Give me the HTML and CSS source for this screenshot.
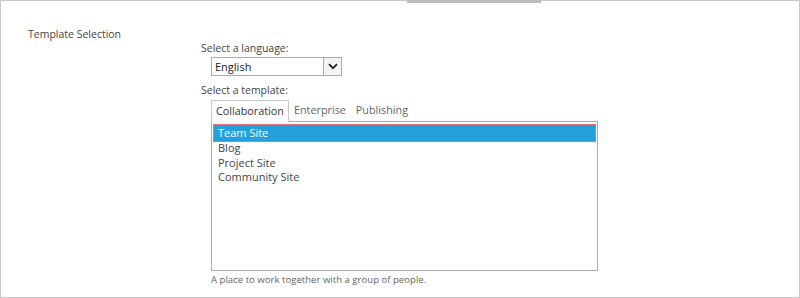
FILE: index.html
```html
<!DOCTYPE html>
<html lang="en">
<head>
    <meta charset="UTF-8">
    <title>Template Selection</title>
    <link rel="stylesheet" href="styles.css">
</head>
<body>
    <div class="page">
        <div class="page__tab-mark"></div>
        <div class="section">
            <div class="section__label">Template Selection</div>
            <div class="section__body">
                <div class="field-label">Select a language:</div>
                <div class="dropdown">
                    <span class="dropdown__value">English</span>
                    <span class="dropdown__arrow">
                        <svg width="10" height="7" viewBox="0 0 10 7"><path d="M1 1.2 L5 5.2 L9 1.2" fill="none" stroke="#222" stroke-width="1.8"/></svg>
                    </span>
                </div>
                <div class="field-label field-label--gap">Select a template:</div>
                <ul class="tabs">
                    <li class="tabs__item tabs__item--active">Collaboration</li>
                    <li class="tabs__item">Enterprise</li>
                    <li class="tabs__item">Publishing</li>
                </ul>
                <ul class="template-list">
                    <li class="template-list__item template-list__item--selected">Team Site</li>
                    <li class="template-list__item">Blog</li>
                    <li class="template-list__item">Project Site</li>
                    <li class="template-list__item">Community Site</li>
                </ul>
                <div class="hint">A place to work together with a group of people.</div>
            </div>
        </div>
    </div>
</body>
</html>
```

FILE: styles.css
```css
* { box-sizing: border-box; }

*, html {
    padding: 0;
    margin: 0;
}

body {
    font-family: "Open Sans", "Noto Sans", sans-serif;
    font-size: 10.5px;
    color: #444;
    background: #fff;
}

.page {
    position: relative;
    height: 298px;
    border: 1px solid #c8c8c8;
}

.page__tab-mark {
    position: absolute;
    top: -1px;
    left: 406px;
    width: 134px;
    height: 3px;
    background: #bdbdbd;
}

.section {
    display: flex;
    padding: 26px 0 0 27px;
}

.section__label {
    width: 173px;
    line-height: 15px;
    color: #444;
}

.section__body {
    padding-top: 14px;
}

.field-label {
    line-height: 15px;
    color: #444;
}

.field-label--gap { margin-top: 7px; }

.dropdown {
    display: flex;
    align-items: stretch;
    width: 131px;
    height: 19px;
    margin: 1px 0 0 10px;
    border: 1px solid #ababab;
    background: #fff;
}

.dropdown__value {
    flex: 1;
    padding-left: 3px;
    line-height: 17px;
    font-size: 11px;
    color: #222;
}

.dropdown__arrow {
    display: flex;
    align-items: center;
    justify-content: center;
    width: 18px;
    border-left: 1px solid #ababab;
    background: #f4f4f4;
}

.tabs {
    list-style: none;
    display: flex;
    margin: 2px 0 0 10px;
    height: 21px;
}

.tabs__item {
    padding: 0 5px;
    line-height: 20px;
    font-size: 10.8px;
    color: #666;
}

.tabs__item--active {
    color: #333;
    border: 1px solid #c6c6c6;
    border-bottom: none;
    background: #fff;
    position: relative;
    z-index: 1;
    height: 22px;
    padding: 0 4px;
}

.template-list {
    list-style: none;
    width: 387px;
    height: 150px;
    margin-left: 10px;
    padding: 2px 1px;
    border: 1px solid #ababab;
}

.template-list__item {
    padding-left: 5px;
    line-height: 14.6px;
    font-size: 11px;
    color: #444;
}

.template-list__item--selected {
    height: 18px;
    line-height: 16px;
    margin-bottom: -1px;
    background: #26a0da;
    color: #fff;
    border: 1px solid #e57177;
    padding-left: 4px;
}

.hint {
    margin: 2px 0 0 10px;
    font-size: 9.6px;
    line-height: 14px;
    color: #666;
}
```
